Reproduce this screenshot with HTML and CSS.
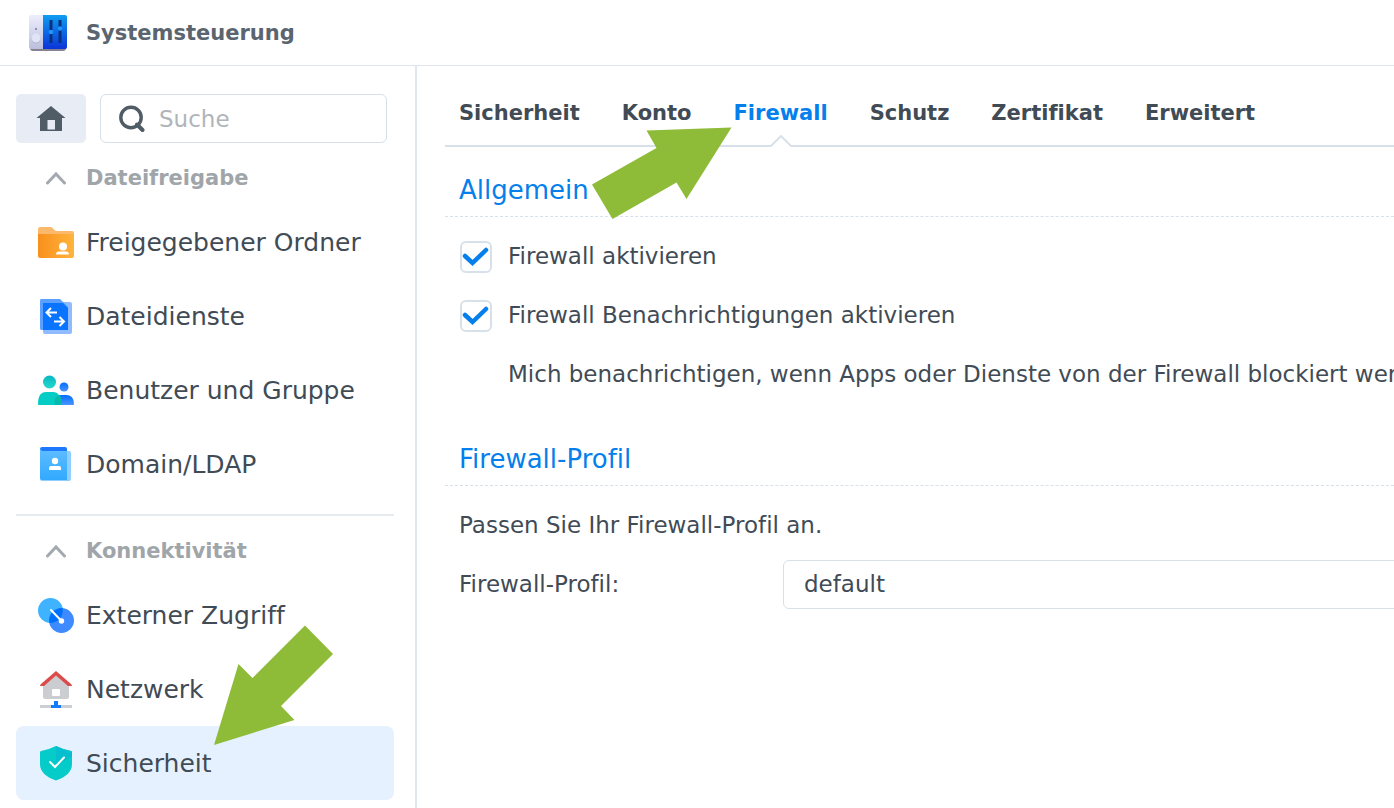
FILE: index.html
```
<!DOCTYPE html>
<html lang="de">
<head>
  <meta charset="UTF-8">
  <meta name="viewport" content="width=device-width, initial-scale=1.0">
  <title>Systemsteuerung</title>
  <link rel="stylesheet" href="styles.css">
</head>
<body>

  <header class="titlebar">
    <svg class="app-icon" width="40" height="40" viewBox="0 0 40 40" aria-hidden="true">
      <defs>
        <linearGradient id="panelBlue" x1="0" y1="0" x2="0" y2="1"><stop offset="0" stop-color="#0f9df0"/><stop offset="1" stop-color="#0c34d8"/></linearGradient>
        <linearGradient id="panelGrey" x1="0" y1="0" x2="0" y2="1"><stop offset="0" stop-color="#eceefd"/><stop offset="1" stop-color="#bcbfdc"/></linearGradient>
      </defs>
      <rect x="2" y="4" width="36" height="34" rx="3" fill="#858391"/>
      <path d="M3 2H15V36H3Q1 36 1 34V4Q1 2 3 2Z" fill="url(#panelGrey)"/>
      <path d="M15 2H37Q39 2 39 4V34Q39 36 37 36H15Z" fill="url(#panelBlue)"/>
      <circle cx="8" cy="16" r="1" fill="#777a92"/>
      <circle cx="8" cy="26" r="4.500" fill="#aeb2cf"/>
      <circle cx="8" cy="25" r="4.500" fill="#e1e4f7"/>
      <path d="M23 7V30M32 7V30" stroke="#06337f" stroke-width="3"/>
      <circle cx="23" cy="19" r="2.300" fill="#2196ff"/>
      <circle cx="32" cy="15.500" r="2.300" fill="#2196ff"/>
    </svg>
    <h1>Systemsteuerung</h1>
  </header>

  <div class="window">
    <aside class="sidebar">
      <div class="search-row">
        <button class="home" type="button" aria-label="Startseite">
          <svg width="30" height="26" viewBox="0 0 30 26"><path d="M15 0L29.500 12H26V25H4V12H.5ZM11.500 14V23.500H19V14Z" fill="#505c66" fill-rule="evenodd"/></svg>
        </button>
        <label class="search">
          <svg width="26" height="28" viewBox="0 0 26 28" aria-hidden="true"><circle cx="12" cy="12.500" r="10.200" fill="none" stroke="#505c66" stroke-width="3.400"/><path d="M18 19.500L23.500 25" stroke="#505c66" stroke-width="4" stroke-linecap="round"/></svg>
          <input type="text" placeholder="Suche" aria-label="Suche">
        </label>
      </div>

      <nav class="group">
        <h2><svg width="20" height="14" viewBox="0 0 20 14"><path d="M1.500 12L10 3L18.500 12" fill="none" stroke="#a4a9af" stroke-width="3" stroke-linecap="round"/></svg>Dateifreigabe</h2>
        <a href="#" class="item">
          <svg width="36" height="36" viewBox="0 0 36 36">
            <defs><linearGradient id="folder"><stop offset="0" stop-color="#f98f1c"/><stop offset="1" stop-color="#ffb43d"/></linearGradient></defs>
            <path d="M2 3H13Q14 3 16 5.500L18 7H34Q36 7 36 9V14H0V5Q0 3 2 3Z" fill="#fcb96c"/>
            <path d="M0 10H36V32Q36 34 34 34H2Q0 34 0 32Z" fill="url(#folder)"/>
            <circle cx="25" cy="22.500" r="4" fill="#fff"/>
            <path d="M18 30.500Q18 27.500 21 27.500H28Q31 27.500 31 30.500Z" fill="#fff"/>
          </svg>Freigegebener Ordner</a>
        <a href="#" class="item">
          <svg width="36" height="36" viewBox="0 0 36 36">
            <rect x="5" y="4" width="29" height="32" rx="2" fill="#91bbff"/>
            <path d="M3 1H22L30 9V32H3Q2 32 2 30V3Q2 1 3 1Z" fill="#5ba0ff"/>
            <path d="M5 5H25L30 10V32H5Z" fill="#0874ff"/>
            <path d="M19 14.500H9M13 10L8.500 14.500L13 19M16 23.500H26M21.500 19L26 23.500L21.500 28" fill="none" stroke="#fff" stroke-width="2"/>
          </svg>Dateidienste</a>
        <a href="#" class="item">
          <svg width="36" height="36" viewBox="0 0 36 36">
            <defs>
              <linearGradient id="userTeal" x1="0" y1="0" x2="0" y2="1"><stop offset="0" stop-color="#05b8c2"/><stop offset="1" stop-color="#27d8cc"/></linearGradient>
              <linearGradient id="userBlue" x1="0" y1="0" x2="0" y2="1"><stop offset="0" stop-color="#006eff"/><stop offset="1" stop-color="#4b94ff"/></linearGradient>
            </defs>
            <circle cx="11.500" cy="10" r="6.500" fill="url(#userTeal)"/>
            <circle cx="26" cy="15" r="4.500" fill="url(#userBlue)"/>
            <path d="M18 23H28Q36 23 36 32Q36 33 35 33H18Z" fill="url(#userBlue)"/>
            <path d="M0 32Q0 20 8 20H15Q23 20 23 33H1Q0 33 0 32Z" fill="#05ccc5"/>
            <path d="M22 23Q24 27 23 33H17Q15 23 22 23Z" fill="#06b9ad"/>
          </svg>Benutzer und Gruppe</a>
        <a href="#" class="item">
          <svg width="36" height="36" viewBox="0 0 36 36">
            <defs><linearGradient id="book" x1="0" y1="0" x2="0" y2="1"><stop offset="0" stop-color="#60bdff"/><stop offset="1" stop-color="#31a9ff"/></linearGradient></defs>
            <rect x="2" y="5" width="31" height="30" rx="2" fill="#8ecfff"/>
            <rect x="2" y="1" width="27" height="9" rx="2" fill="#1b78ff"/>
            <path d="M2 3L4 5H29V34H4Q2 34 2 32Z" fill="url(#book)"/>
            <circle cx="17" cy="15" r="3.200" fill="#fff"/>
            <path d="M11 24V22Q11 20 13 20H21Q23 20 23 22V24Z" fill="#fff"/>
          </svg>Domain/LDAP</a>
      </nav>

      <nav class="group">
        <h2><svg width="20" height="14" viewBox="0 0 20 14"><path d="M1.500 12L10 3L18.500 12" fill="none" stroke="#a4a9af" stroke-width="3" stroke-linecap="round"/></svg>Konnektivität</h2>
        <a href="#" class="item">
          <svg width="36" height="36" viewBox="0 0 36 36">
            <circle cx="12.500" cy="13.500" r="12.500" fill="#3fb3ff"/>
            <circle cx="23.500" cy="23.500" r="12.500" fill="#3d8bff"/>
            <path d="M24.600 11.100A12.500 12.500 0 0 1 11.400 25.900A12.500 12.500 0 0 1 24.600 11.100Z" fill="#0070ff"/>
            <path d="M13 13L23 23.500" stroke="#fff" stroke-width="2" stroke-linecap="round"/>
            <circle cx="23.500" cy="24" r="2.700" fill="#fff"/>
          </svg>Externer Zugriff</a>
        <a href="#" class="item">
          <svg width="36" height="40" viewBox="0 0 36 40">
            <path d="M18 5L31 17V28Q31 30 29 30H7Q5 30 5 28V17Z" fill="#cbcdd1"/>
            <path d="M2 17Q2 16 3 15L18 2L33 15Q34 16 34 17H30L18 6.500L6 17Z" fill="#db4b49"/>
            <rect x="14" y="20" width="8" height="7" rx="1" fill="#fff"/>
            <path d="M2 36H34V39H2Z" fill="#cbced3"/>
            <path d="M16 32H20V36H23V39H13V36H16Z" fill="#127bfa"/>
          </svg>Netzwerk</a>
        <a href="#" class="item active">
          <svg width="36" height="36" viewBox="0 0 36 36">
            <path d="M18 1Q26 5 33 6Q34 6 34 8V19Q34 30 18 35.500Q2 30 2 19V8Q2 6 3 6Q10 5 18 1Z" fill="#05ccc9"/>
            <path d="M18 1Q26 5 33 6Q34 6 34 8V12L18 20Z" fill="#05bfce"/>
            <path d="M12 17L17 22L26 12.500" fill="none" stroke="#fff" stroke-width="2" stroke-linecap="round"/>
          </svg>Sicherheit</a>
      </nav>

      <svg class="arrow arrow-sidebar" width="120" height="120" viewBox="0 0 120 120" aria-hidden="true">
        <path d="M91 .5L119 29L67 81L80.500 95L0 120L24.500 39L38.500 53Z"/>
      </svg>
    </aside>

    <main class="content">
      <nav class="tabs">
        <a href="#">Sicherheit</a>
        <a href="#">Konto</a>
        <a href="#" class="active">Firewall
          <svg class="notch" width="22" height="12" viewBox="0 0 22 12" aria-hidden="true"><path d="M0 12L1 11L11 1L21 11L22 12Z" fill="#fff"/><path d="M0 11H1L11 1L21 11H22" fill="none" stroke="#d8e1e9" stroke-width="2"/></svg>
        </a>
        <a href="#">Schutz</a>
        <a href="#">Zertifikat</a>
        <a href="#">Erweitert</a>
      </nav>

      <section>
        <h3>Allgemein</h3>
        <div class="fields">
          <label class="check"><input type="checkbox" checked>Firewall aktivieren</label>
          <label class="check"><input type="checkbox" checked>Firewall Benachrichtigungen aktivieren</label>
          <p class="hint">Mich benachrichtigen, wenn Apps oder Dienste von der Firewall blockiert werden.</p>
        </div>
      </section>

      <section>
        <h3>Firewall-Profil</h3>
        <div class="fields">
          <p>Passen Sie Ihr Firewall-Profil an.</p>
          <div class="row">
            <label for="profile">Firewall-Profil:</label>
            <select id="profile">
              <option>default</option>
            </select>
          </div>
        </div>
      </section>

      <svg class="arrow arrow-tab" width="140" height="92" viewBox="0 0 140 92" aria-hidden="true">
        <path d="M139.500 .5L94.500 72L84.500 55.500L20.500 92L0 57.500L64.500 21L54.500 3.500Z"/>
      </svg>
    </main>
  </div>

</body>
</html>
```
FILE: styles.css
```
* {
  box-sizing: border-box;
}

body {
  margin: 0;
  min-height: 100vh;
  display: flex;
  flex-direction: column;
  background-color: #fff;
  color: #414b55;
  font-family: Verdana, "DejaVu Sans", sans-serif;
  font-size: 23px;
  font-variant-ligatures: none;
  overflow: hidden;
}

h1, h2, h3, p {
  margin: 0;
}

a {
  color: inherit;
  text-decoration: none;
}

.titlebar {
  display: flex;
  align-items: center;
  gap: 18px;
  height: 66px;
  padding-left: 28px;
  border-bottom: 1px solid #dfe5eb;
}

.titlebar h1 {
  color: #5a6570;
  font-size: 21px;
}

.window {
  flex: 1;
  display: flex;
}

/* Sidebar */
.sidebar {
  position: relative;
  flex: 0 0 417px;
  min-width: 0;
  padding: 28px 21px 8px 16px;
  border-right: 2px solid #e1e7ee;
}

.search-row {
  display: flex;
  gap: 14px;
  height: 49px;
  margin: 0 7px 8px 0;
}

.home {
  width: 70px;
  display: flex;
  align-items: center;
  justify-content: center;
  border: none;
  border-radius: 5px;
  background-color: #e8edf5;
  cursor: pointer;
}

.search {
  flex: 1;
  min-width: 0;
  display: flex;
  align-items: center;
  gap: 14px;
  padding: 0 18px;
  border: 1px solid #d5e0e9;
  border-radius: 6px;
}

.search input {
  flex: 1;
  min-width: 0;
  padding: 0;
  border: none;
  outline: none;
  background: none;
  font: inherit;
  color: inherit;
}

.search input::placeholder {
  color: #b0b5ba;
}

.group + .group {
  margin-top: 13px;
  padding-top: 8px;
  border-top: 2px solid #e6ebf0;
}

.group h2 {
  display: flex;
  align-items: center;
  gap: 20px;
  height: 54px;
  padding-left: 30px;
  color: #a0a5aa;
  font-size: 21px;
}

.item {
  display: flex;
  align-items: center;
  gap: 12px;
  height: 74px;
  padding-left: 22px;
  border-radius: 8px;
  font-size: 25px;
}

.item.active {
  background-color: #e5f1fe;
}

/* Content */
.content {
  position: relative;
  flex: 1;
  min-width: 0;
  padding: 14px 0 0 28px;
  overflow: hidden;
  white-space: nowrap;
}

.tabs {
  display: flex;
  gap: 42px;
  height: 67px;
  padding-left: 14px;
  border-bottom: 2px solid #d8e1e9;
  font-size: 21px;
  font-weight: bold;
  line-height: 66px;
}

.tabs a {
  position: relative;
}

.tabs .active {
  color: #057feb;
}

.notch {
  position: absolute;
  left: 50%;
  bottom: -2px;
  margin-left: -11px;
}

section {
  margin-bottom: 12px;
}

h3 {
  height: 70px;
  padding: 18px 0 0 14px;
  border-bottom: 1px dashed #d8e1e9;
  color: #057feb;
  font-size: 26px;
  font-weight: normal;
  line-height: 50px;
}

.fields {
  display: flex;
  flex-direction: column;
  padding: 10px 0 0 14px;
  line-height: 59px;
}

.check {
  display: flex;
  align-items: center;
  gap: 16px;
}

.check input {
  appearance: none;
  width: 32px;
  height: 32px;
  margin: 0 0 0 1px;
  border: 2px solid #d8e1e9;
  border-radius: 6px;
  background-color: #fff;
}

.check input:checked::before {
  content: "";
  display: block;
  width: 28px;
  height: 28px;
  background: url("data:image/svg+xml,%3Csvg xmlns='http://www.w3.org/2000/svg' viewBox='0 0 28 28'%3E%3Cpath d='M3 13L10.500 20L24 7' fill='none' stroke='%23057feb' stroke-width='4.500' stroke-linecap='round'/%3E%3C/svg%3E");
}

.hint {
  padding-left: 49px;
}

.row {
  display: flex;
  align-items: center;
}

.row label {
  flex: 0 0 324px;
}

.row select {
  flex: 0 0 640px;
  height: 49px;
  padding: 0 20px;
  appearance: none;
  border: 1px solid #d5e0e9;
  border-radius: 6px;
  background-color: #fff;
  font: inherit;
  line-height: 47px;
  color: inherit;
}

/* Pointers lying over the page */
.arrow {
  position: absolute;
  fill: #8fbc38;
  pointer-events: none;
}

.arrow-sidebar {
  left: 214px;
  top: 559px;
}

.arrow-tab {
  left: 175px;
  top: 61px;
}
```
